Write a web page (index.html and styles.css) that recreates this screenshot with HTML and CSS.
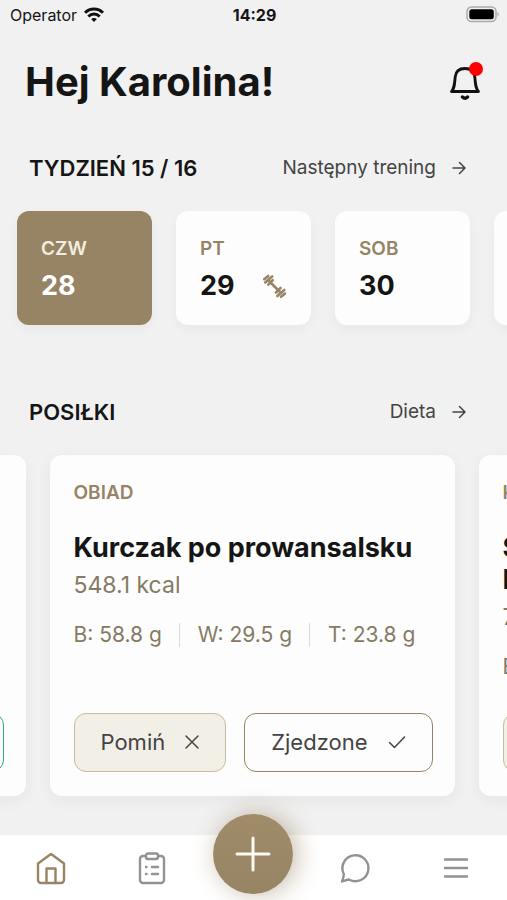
FILE: index.html
```html
<!DOCTYPE html>
<html lang="pl">
<head>
  <meta charset="UTF-8">
  <meta name="viewport" content="width=device-width, initial-scale=1">
  <title>Hej Karolina!</title>
  <link rel="stylesheet" href="styles.css">
</head>
<body>

<div class="status">
  <div class="status-left">
    <span>Operator</span>
    <svg width="20" height="16" viewBox="0 0 20 16" fill="none" stroke="#111" stroke-width="3">
      <path d="M1 5.800C6 .700 14 .700 19 5.800"/>
      <path d="M4.300 9.500c3.300-3.200 8.100-3.200 11.400 0"/>
      <path d="M10 15l-2.900-2.900c1.600-1.500 4.200-1.500 5.800 0z" fill="#111" stroke="none"/>
    </svg>
  </div>
  <span class="clock">14:29</span>
  <div class="status-right">
    <svg width="34" height="18" viewBox="0 0 34 18">
      <rect x="2" y="1" width="29" height="14.500" rx="4.500" fill="none" stroke="#aaa" stroke-width="1.500"/>
      <rect x="4.300" y="3.200" width="24.500" height="10" rx="2.500" fill="#000"/>
      <path d="M32.500 6c1.600.700 1.600 3.800 0 4.500z" fill="#aaa"/>
    </svg>
  </div>
</div>

<header class="top">
  <h1>Hej Karolina!</h1>
  <button class="bell" type="button" aria-label="Powiadomienia">
    <svg width="34" height="38" viewBox="0 0 34 38" fill="none" stroke="#111" stroke-width="2.800" stroke-linecap="round" stroke-linejoin="round">
      <path d="M3.500 28.500H30.500C28 26 27.500 23 26.800 14C26.300 8.500 23 5.500 17 5.500S7.700 8.500 7.200 14C6.500 23 6 26 3.500 28.500z"/>
      <path d="M14.500 34c1.500 1.400 3.500 1.400 5 0" stroke-width="3.400"/>
    </svg>
    <span class="dot"></span>
  </button>
</header>

<main>
  <section>
    <div class="section-head">
      <h2>TYDZIEŃ 15 / 16</h2>
      <a href="#">Następny trening
        <svg width="14" height="14" viewBox="0 0 14 14"><path d="M1 7h12M7.500 1.500L13 7l-5.500 5.500"/></svg>
      </a>
    </div>
    <div class="days">
      <button type="button" class="day active">
        <span class="label">CZW</span>
        <span class="num">28</span>
      </button>
      <button type="button" class="day">
        <span class="label">PT</span>
        <span class="num">29
          <svg width="26" height="26" viewBox="0 0 26 26" fill="none" stroke="#978465" stroke-width="2.600" stroke-linecap="round">
            <path d="M8 8l10.500 10.500"/>
            <path d="M3.200 6.200L7.200 3M4.200 9.500l7-6M7.300 11.700l4.500-4.500"/>
            <path d="M15 19.500l4.500-4.500M16.300 23l7-6M20 23.800l4-3.200"/>
          </svg>
        </span>
      </button>
      <button type="button" class="day">
        <span class="label">SOB</span>
        <span class="num">30</span>
      </button>
      <button type="button" class="day">
        <span class="label">ND</span>
        <span class="num">31</span>
      </button>
    </div>
  </section>

  <section>
    <div class="section-head meals-head">
      <h2>POSIŁKI</h2>
      <a href="#">Dieta
        <svg width="14" height="14" viewBox="0 0 14 14"><path d="M1 7h12M7.500 1.500L13 7l-5.500 5.500"/></svg>
      </a>
    </div>
    <div class="meals">
      <article class="meal">
        <div class="actions">
          <button type="button" class="btn done" aria-label="Zjedzone"></button>
        </div>
      </article>

      <article class="meal">
        <span class="label">OBIAD</span>
        <h3>Kurczak po prowansalsku</h3>
        <p class="kcal">548.1 kcal</p>
        <ul class="macros">
          <li>B: 58.8 g</li>
          <li>W: 29.5 g</li>
          <li>T: 23.8 g</li>
        </ul>
        <div class="actions">
          <button type="button" class="btn skip">Pomiń
            <svg width="14" height="14" viewBox="0 0 14 14"><path d="M1 1l12 12M13 1L1 13"/></svg>
          </button>
          <button type="button" class="btn eat">Zjedzone
            <svg width="18" height="14" viewBox="0 0 18 14"><path d="M1.500 7.500l5 5L16.500 2"/></svg>
          </button>
        </div>
      </article>

      <article class="meal">
        <span class="label">KOLACJA</span>
        <h3>Sałatka<br>Pomidorowa</h3>
        <p class="kcal">720.4 kcal</p>
        <ul class="macros">
          <li>B: 31.2 g</li>
        </ul>
        <div class="actions">
          <button type="button" class="btn skip" aria-label="Pomiń"></button>
        </div>
      </article>
    </div>
  </section>
</main>

<nav class="tabs">
  <a href="#" class="current" aria-label="Start">
    <svg width="32" height="34" viewBox="0 0 32 34">
      <path d="M3 12.500L16 3l13 9.500V29a3 3 0 0 1-3 3H6a3 3 0 0 1-3-3z"/>
      <path d="M11.500 32V17.500h9V32"/>
    </svg>
  </a>
  <a href="#" aria-label="Plan">
    <svg width="28" height="34" viewBox="0 0 28 34">
      <path d="M8 5H5a3 3 0 0 0-3 3v21a3 3 0 0 0 3 3h18a3 3 0 0 0 3-3V8a3 3 0 0 0-3-3h-3"/>
      <rect x="8" y="2.500" width="12" height="5.500" rx="2"/>
      <path d="M8 16h.500M14 16h6M8 23h.500M14 23h6"/>
    </svg>
  </a>
  <button type="button" class="add" aria-label="Dodaj">
    <svg width="38" height="38" viewBox="0 0 38 38"><path d="M19 3v32M3 19h32"/></svg>
  </button>
  <a href="#" aria-label="Wiadomości">
    <svg width="32" height="34" viewBox="0 0 32 34">
      <path d="M3 30.500c1-2.500 2-5 1.800-7.500A13 13 0 1 1 10 28.500c-2.200.300-4.500 1.200-7 2z"/>
    </svg>
  </a>
  <a href="#" aria-label="Menu">
    <svg width="28" height="34" viewBox="0 0 28 34"><path d="M3 8.500h22M3 17h22M3 25.500h22"/></svg>
  </a>
</nav>

</body>
</html>
```
FILE: styles.css
```css
* {
  box-sizing: border-box;
}
body {
  margin: 0;
  min-height: 100vh;
  display: flex;
  flex-direction: column;
  background: #f1f1f1;
  color: #151515;
  font-family: Inter, "Liberation Sans", sans-serif;
  overflow-x: hidden;
}
h1, h2, h3, p, ul {
  margin: 0;
  padding: 0;
}
button {
  font-family: inherit;
  cursor: pointer;
}
a {
  text-decoration: none;
}
svg {
  display: block;
  flex: none;
}

/* status bar */
.status {
  display: grid;
  grid-template-columns: 1fr auto 1fr;
  align-items: center;
  height: 30px;
  padding: 0 8px 0 10px;
  font-size: 16px;
}
.status-left {
  display: flex;
  align-items: center;
  gap: 7px;
}
.clock {
  font-weight: 700;
}
.status-right {
  display: flex;
  justify-content: flex-end;
}

.top {
  display: flex;
  justify-content: space-between;
  align-items: center;
  padding: 27px 25px 0;
}
h1 {
  font-size: 40px;
  line-height: 50px;
  font-weight: 700;
}
.bell {
  position: relative;
  padding: 0;
  border: 0;
  background: none;
}
.dot {
  position: absolute;
  top: -1px;
  right: -1px;
  width: 14px;
  height: 14px;
  border-radius: 50%;
  background: #f00;
}

main {
  flex: 1;
}
.section-head {
  display: flex;
  justify-content: space-between;
  align-items: center;
  padding: 48px 41px 0 29px;
}
.section-head h2 {
  font-size: 22px;
  line-height: 26px;
  font-weight: 600;
}
.section-head a {
  display: flex;
  align-items: center;
  gap: 16px;
  color: #444;
  font-size: 19px;
  line-height: 26px;
}
.section-head svg,
.btn svg {
  fill: none;
  stroke: currentColor;
  stroke-width: 1.5px;
  stroke-linecap: round;
  stroke-linejoin: round;
}
.meals-head {
  padding-top: 74px;
}

.label {
  display: block;
  color: #978465;
  font-size: 19px;
  line-height: 24px;
  font-weight: 600;
}

/* days */
.days {
  display: flex;
  gap: 24px;
  padding: 30px 0 0 17px;
}
.day {
  flex: 0 0 135px;
  height: 114px;
  padding: 4px 24px 0;
  border: 0;
  border-radius: 12px;
  background: #fdfdfd;
  color: #151515;
  text-align: left;
  box-shadow: 0 4px 12px rgba(0, 0, 0, 0.04);
}
.num {
  display: flex;
  justify-content: space-between;
  align-items: center;
  margin-top: 8px;
  font-size: 27px;
  line-height: 34px;
  font-weight: 700;
}
.day.active {
  background: #978465;
  color: #fff;
}
.day.active .label {
  color: #f5ecdf;
}

/* meals */
.meals {
  display: flex;
  justify-content: center;
  gap: 24px;
  padding: 30px 3px 38px 0;
}
.meal {
  flex: 0 0 405px;
  display: flex;
  flex-direction: column;
  min-height: 341px;
  padding: 26px 22px 24px 24px;
  border-radius: 12px;
  background: #fdfdfd;
  box-shadow: 0 4px 16px rgba(0, 0, 0, 0.05);
}
.meal h3 {
  margin-top: 27px;
  font-size: 27px;
  line-height: 32px;
  font-weight: 700;
}
.kcal {
  margin-top: 6px;
  color: #857a63;
  font-size: 23px;
  line-height: 30px;
}
.macros {
  display: flex;
  align-items: center;
  margin-top: 23px;
  list-style: none;
  color: #857a63;
  font-size: 21px;
  line-height: 24px;
}
.macros li + li {
  margin-left: 17px;
  padding-left: 18px;
  border-left: 1px solid #dedad0;
}
.actions {
  display: flex;
  gap: 18px;
  margin-top: auto;
}
.btn {
  flex: 1 1 auto;
  display: flex;
  justify-content: center;
  align-items: center;
  gap: 20px;
  height: 59px;
  padding: 0 6px 2px;
  border: 1px solid #978465;
  border-radius: 12px;
  background: #fdfdfd;
  color: #444;
  font-size: 22px;
}
.btn.skip {
  border-color: #c5bd9f;
  background: #f2efe6;
}
.btn.done {
  border-color: #35a878;
}

/* bottom bar */
.tabs {
  display: grid;
  grid-template-columns: repeat(5, 1fr);
  align-items: center;
  justify-items: center;
  height: 65px;
  background: #fff;
}
.tabs svg {
  fill: none;
  stroke: #929292;
  stroke-width: 2.4px;
  stroke-linecap: round;
  stroke-linejoin: round;
}
.tabs .current svg {
  stroke: #978465;
}
.add {
  display: flex;
  justify-content: center;
  align-items: center;
  width: 80px;
  height: 80px;
  margin-top: -28px;
  border: 0;
  border-radius: 50%;
  background: linear-gradient(#a08c68, #978465);
  box-shadow: 4px 0 24px rgba(130, 100, 60, 0.45);
}
.tabs .add svg {
  stroke: #fdfaf3;
  stroke-width: 3px;
}
```
